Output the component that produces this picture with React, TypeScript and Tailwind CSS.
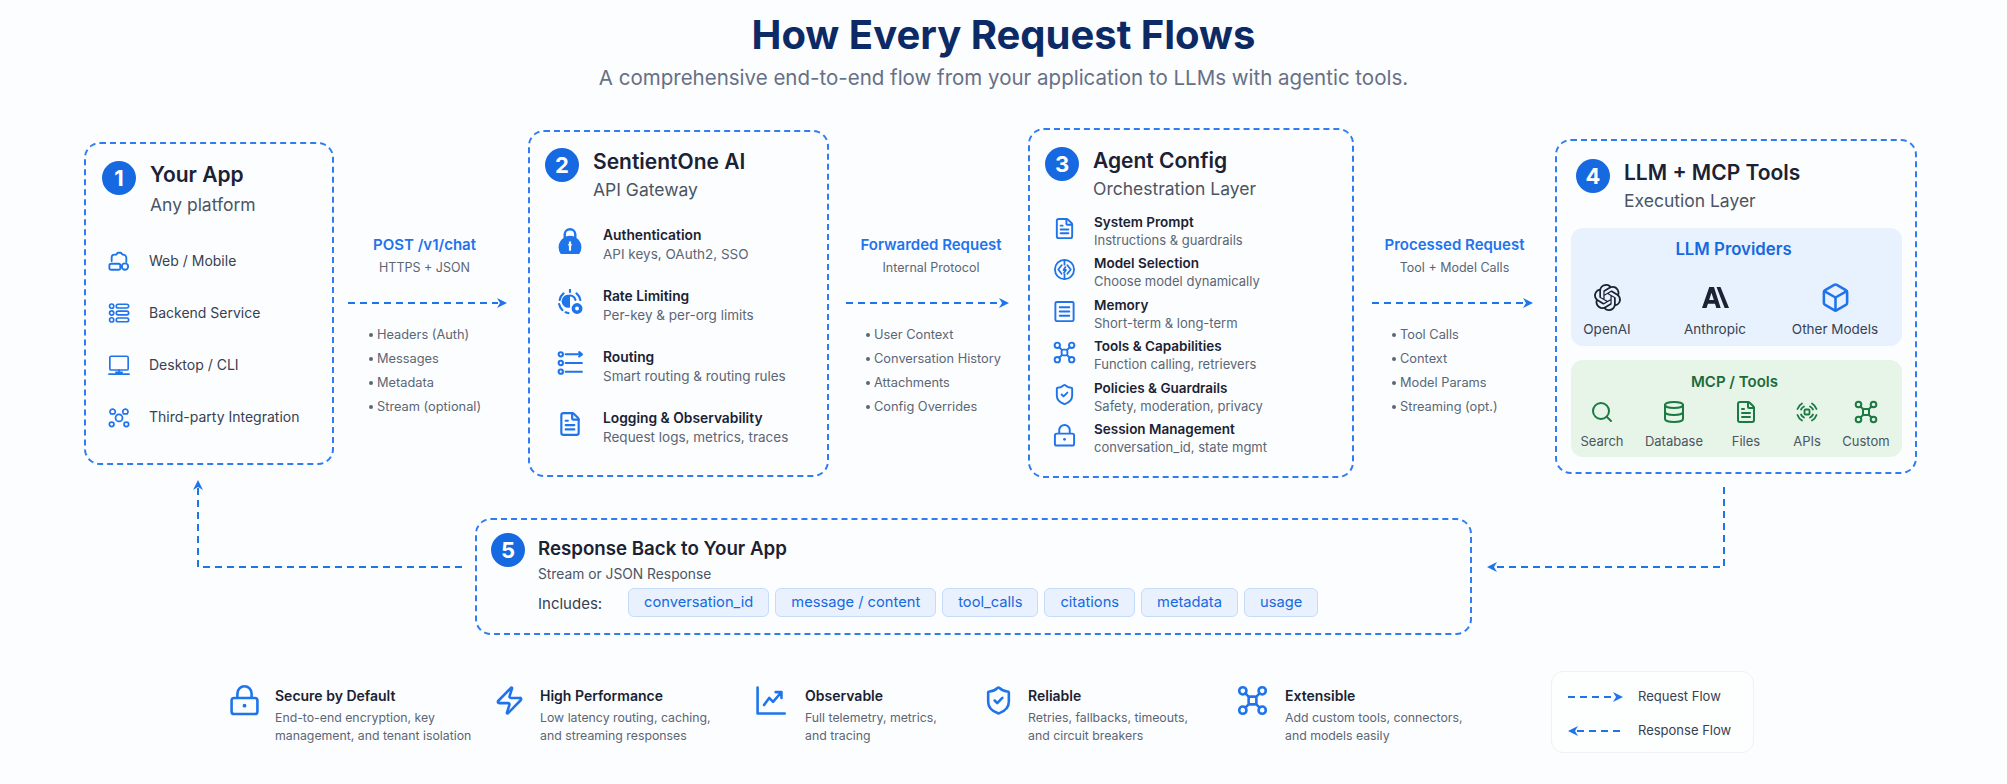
import React from 'react';
import { Database, FileText, Search, Box, ShieldCheck, Zap } from 'lucide-react';
import { SiOpenai } from 'react-icons/si';

type IconProps = { className?: string };

const Svg = ({ className, children, sw = 2 }: IconProps & { children: React.ReactNode; sw?: number }) => (
  <svg viewBox="0 0 24 24" fill="none" stroke="currentColor" strokeWidth={sw} strokeLinecap="round" strokeLinejoin="round" className={className}>
    {children}
  </svg>
);

const WebMobileIcon = ({ className }: IconProps) => (
  <Svg className={className}>
    <path d="M4 12V8a3 3 0 0 1 3-3h2l1.500-2h3.500l2 2a3.500 3.500 0 0 1 4 3.500V13" />
    <rect x="1.500" y="15" width="12" height="6.500" rx="2" />
    <circle cx="18.500" cy="18" r="3.500" />
    <path d="M13.500 18h1.500" />
  </Svg>
);

const ServerRowsIcon = ({ className }: IconProps) => (
  <Svg className={className} sw={1.8}>
    <circle cx="4" cy="4.500" r="2.300" />
    <circle cx="4" cy="12" r="2.300" />
    <circle cx="4" cy="19.500" r="2.300" />
    <rect x="9" y="2.500" width="13.500" height="4" rx="2" />
    <rect x="9" y="10" width="13.500" height="4" rx="2" />
    <rect x="9" y="17.500" width="13.500" height="4" rx="2" />
  </Svg>
);

const DesktopIcon = ({ className }: IconProps) => (
  <Svg className={className} sw={1.8}>
    <rect x="2" y="2.500" width="20" height="15" rx="1.500" />
    <path d="M12 17.500V21M8.500 20h7M1 22h22" />
  </Svg>
);

const IntegrationIcon = ({ className }: IconProps) => (
  <Svg className={className} sw={1.9}>
    <circle cx="12" cy="13" r="3.800" />
    <circle cx="4" cy="20" r="2.500" />
    <circle cx="20" cy="20" r="2.500" />
    <path d="M3 8.500a3 3 0 0 1 3-5 3 3 0 0 1 1 5zM21 8.500a3 3 0 0 0-3-5 3 3 0 0 0-1 5z" />
  </Svg>
);

const SolidLockIcon = ({ className }: IconProps) => (
  <svg viewBox="0 0 24 24" className={className} fill="currentColor">
    <path d="M12 0a6 6 0 0 0-6 6v3.200a10.500 10.500 0 1 0 12 0V6a6 6 0 0 0-6-6zm0 2.200A3.800 3.800 0 0 1 15.800 6v1.800a10.500 10.500 0 0 0-7.600 0V6A3.800 3.800 0 0 1 12 2.200z" />
    <path d="M11 12.500h2V15h1.200L13 16.500V21h-2v-4.500L9.800 15H11z" fill="#fff" />
  </svg>
);

const RateIcon = ({ className }: IconProps) => (
  <svg viewBox="0 0 24 24" className={className} fill="none" stroke="currentColor" strokeWidth="2" strokeLinecap="round">
    <path d="M12 0.800v2M6 4a10 10 0 0 0-3.500 6M2 14a10 10 0 0 0 3 5.500M18 4a10 10 0 0 1 3.500 6M8 21.500a10 10 0 0 0 2.500 .7" />
    <path d="M12 5.500a6 6 0 1 0 0 11.500z" fill="currentColor" stroke="none" />
    <path d="M12 6a5.500 5.500 0 0 1 5 4" />
    <circle cx="18.500" cy="18" r="5" fill="currentColor" stroke="none" />
    <circle cx="18.500" cy="18" r="1.800" fill="#fff" stroke="none" />
  </svg>
);

const RoutingIcon = ({ className }: IconProps) => (
  <Svg className={className} sw={1.9}>
    <circle cx="3.500" cy="4" r="2" />
    <circle cx="3.500" cy="12" r="2" />
    <circle cx="3.500" cy="20" r="2" />
    <path d="M8 4h15M20.500 2l2.500 2-2.500 2M8 12h15M8 20h15" />
  </Svg>
);

const ModelIcon = ({ className }: IconProps) => (
  <Svg className={className} sw={1.9}>
    <circle cx="12" cy="12" r="10" />
    <path d="M12 2v5M12 17v5M9 7.500 5.500 12 9 16.500M15 7.500l3.500 4.500-3.500 4.500M13 9.500l-2 3h2.500l-2 3" />
  </Svg>
);

const MemoryIcon = ({ className }: IconProps) => (
  <Svg className={className}>
    <rect x="2.500" y="2" width="19" height="20" rx="1.500" />
    <path d="M7 7.500h10M7 12h10M7 16.500h10" />
  </Svg>
);

const HubIcon = ({ className }: IconProps) => (
  <Svg className={className} sw={2}>
    <circle cx="4.500" cy="4.500" r="2.800" />
    <circle cx="19.500" cy="4.500" r="2.800" />
    <circle cx="4.500" cy="19.500" r="2.800" />
    <circle cx="19.500" cy="19.500" r="2.800" />
    <rect x="9" y="9" width="6" height="6" rx="1.500" />
    <path d="m6.500 6.500 2.500 2.500M17.500 6.500 15 9M6.500 17.500 9 15M17.500 17.500 15 15" />
  </Svg>
);

const OutlineLockIcon = ({ className }: IconProps) => (
  <svg viewBox="0 0 24 24" className={className} fill="none" stroke="currentColor" strokeWidth="2">
    <rect x="2" y="10" width="20" height="12.500" rx="2" />
    <path d="M6.500 10V6.500a5.500 5.500 0 0 1 11 0V10" />
    <circle cx="12" cy="16" r="1.500" fill="currentColor" stroke="none" />
  </svg>
);

const TrendIcon = ({ className }: IconProps) => (
  <Svg className={className}>
    <path d="M2 2v20h21" />
    <path d="m7 15.500 4-5.500 3 3 6-7M16 5.500h4.500V10" />
  </Svg>
);

const ApisIcon = ({ className }: IconProps) => (
  <Svg className={className} sw={1.8}>
    <rect x="9.500" y="9.500" width="5" height="5" rx="1" />
    <path d="M2.500 9A10 10 0 0 1 7 3.500M21.500 9A10 10 0 0 0 17 3.500M2.500 15A10 10 0 0 0 7 20.500M21.500 15A10 10 0 0 1 17 20.500" />
    <path d="M6 9.500A7 7 0 0 1 9 6.500M18 9.500A7 7 0 0 0 15 6.500M6 14.500A7 7 0 0 0 9 17.500M18 14.500A7 7 0 0 1 15 17.500" />
  </Svg>
);

const AnthropicIcon = ({ className }: IconProps) => (
  <svg viewBox="0 0 26 20" className={className} fill="currentColor">
    <path fillRule="evenodd" d="M0 20 7 0h4.500L18 20h-4.200l-1.300-4H5.700l-1.300 4zM6.900 12.500h4.500L9.100 5.500z" />
    <path d="M14 0h3.800L26 20h-4.200z" />
  </svg>
);

const FlowArrow = ({ width, dir = 'right' }: { width: number; dir?: 'right' | 'left' }) => (
  <svg width={width} height="14" viewBox={`0 0 ${width} 14`} className="block text-[#1f74ec]">
    {dir === 'right' ? (
      <>
        <path d={`M0 7H${width - 9}`} stroke="currentColor" strokeWidth="2" strokeDasharray="7 5" />
        <path d={`M${width - 10} 2 ${width} 7 ${width - 10} 12 ${width - 7} 7z`} fill="currentColor" />
      </>
    ) : (
      <>
        <path d={`M9 7H${width}`} stroke="currentColor" strokeWidth="2" strokeDasharray="7 5" />
        <path d={`M10 2 0 7 10 12 7 7z`} fill="currentColor" />
      </>
    )}
  </svg>
);

const Badge = ({ n }: { n: number }) => (
  <div className="w-[34px] h-[34px] shrink-0 rounded-full bg-[#1669e0] text-white flex items-center justify-center text-[22px] font-bold leading-none">
    {n}
  </div>
);

const CardHeader = ({ n, title, sub, subClass = 'mt-[1px]' }: { n: number; title: string; sub: string; subClass?: string }) => (
  <div className="flex gap-[14px]">
    <Badge n={n} />
    <div>
      <div className="text-[21px] leading-[28px] font-semibold text-[#1a2233]">{title}</div>
      <div className={`${subClass} text-[17.500px] leading-[26px] text-[#4b5563]`}>{sub}</div>
    </div>
  </div>
);

const CARD = 'shrink-0 rounded-[16px] border-2 border-dashed border-[#2f7df0] bg-[#fcfdfe]';

const appItems = [
  { Icon: WebMobileIcon, label: 'Web / Mobile' },
  { Icon: ServerRowsIcon, label: 'Backend Service' },
  { Icon: DesktopIcon, label: 'Desktop / CLI' },
  { Icon: IntegrationIcon, label: 'Third-party Integration' },
];

const gatewayItems = [
  { Icon: SolidLockIcon, title: 'Authentication', sub: 'API keys, OAuth2, SSO' },
  { Icon: RateIcon, title: 'Rate Limiting', sub: 'Per-key & per-org limits' },
  { Icon: RoutingIcon, title: 'Routing', sub: 'Smart routing & routing rules' },
  { Icon: FileText, title: 'Logging & Observability', sub: 'Request logs, metrics, traces' },
];

const agentItems = [
  { Icon: FileText, title: 'System Prompt', sub: 'Instructions & guardrails' },
  { Icon: ModelIcon, title: 'Model Selection', sub: 'Choose model dynamically' },
  { Icon: MemoryIcon, title: 'Memory', sub: 'Short-term & long-term' },
  { Icon: HubIcon, title: 'Tools & Capabilities', sub: 'Function calling, retrievers' },
  { Icon: ShieldCheck, title: 'Policies & Guardrails', sub: 'Safety, moderation, privacy' },
  { Icon: OutlineLockIcon, title: 'Session Management', sub: 'conversation_id, state mgmt' },
];

const mcpTools = [
  { Icon: Search, label: 'Search', col: 'w-[62px]' },
  { Icon: Database, label: 'Database', col: 'w-[82px]' },
  { Icon: FileText, label: 'Files', col: 'w-[62px]' },
  { Icon: ApisIcon, label: 'APIs', col: 'w-[60px]' },
  { Icon: HubIcon, label: 'Custom', col: 'w-[58px]' },
];

const chips = ['conversation_id', 'message / content', 'tool_calls', 'citations', 'metadata', 'usage'];

const features = [
  { Icon: OutlineLockIcon, title: 'Secure by Default', lines: ['End-to-end encryption, key', 'management, and tenant isolation'], item: 'w-[265px]', col: 'w-[43px]' },
  { Icon: Zap, title: 'High Performance', lines: ['Low latency routing, caching,', 'and streaming responses'], item: 'w-[261px]', col: 'w-[43px]' },
  { Icon: TrendIcon, title: 'Observable', lines: ['Full telemetry, metrics,', 'and tracing'], item: 'w-[228px]', col: 'w-[47px]' },
  { Icon: ShieldCheck, title: 'Reliable', lines: ['Retries, fallbacks, timeouts,', 'and circuit breakers'], item: 'w-[254px]', col: 'w-[42px]' },
  { Icon: HubIcon, title: 'Extensible', lines: ['Add custom tools, connectors,', 'and models easily'], item: 'w-[311px]', col: 'w-[45px]' },
];

const Connector = ({ label, sub, items, boxClass, labelClass, arrowClass, listClass, arrowWidth }: {
  label: string;
  sub: string;
  items: string[];
  boxClass: string;
  labelClass: string;
  arrowClass: string;
  listClass: string;
  arrowWidth: number;
}) => (
  <div className={`${boxClass} shrink-0 self-stretch pt-[106px]`}>
    <div className={`${labelClass} text-center`}>
      <div className="text-[15px] leading-[22px] font-semibold text-[#1f74ec] whitespace-nowrap">{label}</div>
      <div className="text-[12.500px] leading-[18px] mt-[3px] text-[#5b6675] whitespace-nowrap">{sub}</div>
    </div>
    <div className={`${arrowClass} mt-[19px]`}>
      <FlowArrow width={arrowWidth} />
    </div>
    <ul className={`${listClass} mt-[13px]`}>
      {items.map(item => (
        <li key={item} className="flex items-center gap-[4px] text-[12.800px] leading-[24px] text-[#5b6675] whitespace-nowrap">
          <span className="w-[4px] h-[4px] rounded-full bg-[#5b6675]" />
          {item}
        </li>
      ))}
    </ul>
  </div>
);

export default function App() {
  return (
    <div className="w-[2007px] h-[784px] overflow-hidden bg-[#fcfdfe] font-['Inter',sans-serif]">
      {/* Heading */}
      <div className="pt-[13px] text-center">
        <h1 className="text-[40px] leading-[44px] font-bold text-[#0c2a66]">How Every Request Flows</h1>
        <p className="text-[20.500px] leading-[28px] mt-[7px] text-[#667085]">
          A comprehensive end-to-end flow from your application to LLMs with agentic tools.
        </p>
      </div>

      {/* Main flow */}
      <div className="flex items-center h-[350px] mt-[36px] pl-[84px]">
        <div className={`${CARD} w-[250px] h-[323px] pl-[16px] pt-[17px]`}>
          <CardHeader n={1} title="Your App" sub="Any platform" subClass="mt-[3px]" />
          <div className="mt-[17px]">
            {appItems.map(({ Icon, label }) => (
              <div key={label} className="flex items-center h-[52px] pl-[6px] gap-[19px]">
                <Icon className="w-[22px] h-[22px] text-[#1f74ec] shrink-0" />
                <span className="text-[14px] text-[#374151] whitespace-nowrap">{label}</span>
              </div>
            ))}
          </div>
        </div>

        <Connector
          label="POST /v1/chat"
          sub="HTTPS + JSON"
          items={['Headers (Auth)', 'Messages', 'Metadata', 'Stream (optional)']}
          boxClass="w-[194px]"
          labelClass="pr-[13px]"
          arrowClass="ml-[14px]"
          listClass="ml-[35px]"
          arrowWidth={159}
        />

        <div className={`${CARD} w-[301px] h-[347px] pl-[15px] pt-[16px]`}>
          <CardHeader n={2} title="SentientOne AI" sub="API Gateway" />
          <div className="mt-[22px] flex flex-col gap-[22px] pl-[12px]">
            {gatewayItems.map(({ Icon, title, sub }) => (
              <div key={title} className="flex h-[39px] gap-[20px]">
                <Icon className="w-[26px] h-[26px] mt-[3px] text-[#1f74ec] shrink-0" />
                <div>
                  <div className="text-[13.800px] leading-[20px] font-semibold text-[#1a2233] whitespace-nowrap">{title}</div>
                  <div className="text-[13.500px] leading-[19px] text-[#5b6675] whitespace-nowrap">{sub}</div>
                </div>
              </div>
            ))}
          </div>
        </div>

        <Connector
          label="Forwarded Request"
          sub="Internal Protocol"
          items={['User Context', 'Conversation History', 'Attachments', 'Config Overrides']}
          boxClass="w-[199px]"
          labelClass="pl-[5px]"
          arrowClass="ml-[17px]"
          listClass="ml-[37px]"
          arrowWidth={163}
        />

        <div className={`${CARD} w-[326px] h-[350px] pl-[15px] pt-[17px]`}>
          <CardHeader n={3} title="Agent Config" sub="Orchestration Layer" />
          <div className="mt-[11px] flex flex-col gap-[5.400px] pl-[8px]">
            {agentItems.map(({ Icon, title, sub }) => (
              <div key={title} className="flex h-[36px] gap-[18px]">
                <Icon className="w-[23px] h-[23px] mt-[4px] text-[#1f74ec] shrink-0" />
                <div>
                  <div className="text-[13.500px] leading-[18px] font-semibold text-[#1a2233] whitespace-nowrap">{title}</div>
                  <div className="text-[13px] leading-[18px] text-[#5b6675] whitespace-nowrap">{sub}</div>
                </div>
              </div>
            ))}
          </div>
        </div>

        <Connector
          label="Processed Request"
          sub="Tool + Model Calls"
          items={['Tool Calls', 'Context', 'Model Params', 'Streaming (opt.)']}
          boxClass="w-[201px]"
          labelClass=""
          arrowClass="ml-[18px]"
          listClass="ml-[38px]"
          arrowWidth={161}
        />

        <div className={`${CARD} w-[362px] h-[335px] mt-[7px] pl-[14px] pt-[18px]`}>
          <div className="pl-[5px]">
            <CardHeader n={4} title="LLM + MCP Tools" sub="Execution Layer" />
          </div>
          <div className="mt-[14px] w-[331px] h-[118px] rounded-[12px] bg-[#e8f1fe] pt-[10px]">
            <div className="text-center pr-[6px] text-[16.800px] leading-[22px] font-semibold text-[#1669e0]">LLM Providers</div>
            <div className="grid grid-cols-[72px_144px_96px] mt-[20px] text-center text-[13.500px] leading-[18px] text-[#374151]">
              <div className="flex flex-col items-center justify-end gap-[9px] h-[58px]">
                <SiOpenai className="w-[27px] h-[27px] text-[#1a2233]" />
                <span>OpenAI</span>
              </div>
              <div className="flex flex-col items-center justify-end gap-[9px] h-[58px]">
                <AnthropicIcon className="w-[27px] h-[27px] text-[#1a2233]" />
                <span>Anthropic</span>
              </div>
              <div className="flex flex-col items-center justify-end gap-[7px] h-[58px]">
                <Box className="w-[31px] h-[31px] text-[#1f74ec]" />
                <span className="whitespace-nowrap">Other Models</span>
              </div>
            </div>
          </div>
          <div className="mt-[14px] w-[331px] h-[97px] rounded-[12px] bg-[#e7f4e8] pt-[11px]">
            <div className="text-center pr-[4px] text-[15px] leading-[22px] font-semibold text-[#1b6b3a]">MCP / Tools</div>
            <div className="flex mt-[7px] text-[13px] leading-[18px] text-[#4b5563]">
              {mcpTools.map(({ Icon, label, col }) => (
                <div key={label} className={`${col} flex flex-col items-center gap-[8px]`}>
                  <Icon className="w-[24px] h-[24px] text-[#1b7a43]" />
                  <span>{label}</span>
                </div>
              ))}
            </div>
          </div>
        </div>
      </div>

      {/* Response row */}
      <div className="relative mt-[40px] pl-[475px]">
        <svg width="280" height="100" viewBox="0 0 280 100" className="absolute left-[190px] top-[-40px] text-[#1f74ec]">
          <path d="M272 89H8V10" fill="none" stroke="currentColor" strokeWidth="2" strokeDasharray="7 5" />
          <path d="M8 2 3 12 8 9 13 12z" fill="currentColor" />
        </svg>
        <svg width="250" height="100" viewBox="0 0 250 100" className="absolute left-[1480px] top-[-40px] text-[#1f74ec]">
          <path d="M244 9V89H16" fill="none" stroke="currentColor" strokeWidth="2" strokeDasharray="7 5" />
          <path d="M7 89 17 84 14 89 17 94z" fill="currentColor" />
        </svg>
        <div className={`${CARD} w-[997px] h-[117px] pl-[14px] pt-[13px] flex gap-[13px]`}>
          <Badge n={5} />
          <div>
            <div className="text-[18.700px] leading-[28px] mt-[2px] font-semibold text-[#1a2233]">Response Back to Your App</div>
            <div className="text-[13.800px] leading-[20px] mt-[1px] text-[#4b5563]">Stream or JSON Response</div>
            <div className="flex items-center mt-[4px]">
              <span className="w-[90px] mt-[3px] text-[15px] text-[#374151]">Includes:</span>
              <div className="flex gap-[6px]">
                {chips.map(chip => (
                  <span key={chip} className="h-[29px] px-[15px] flex items-center rounded-[6px] border border-[#c5dcf9] bg-[#e8f1fd] text-[14.700px] text-[#1669e0] whitespace-nowrap">
                    {chip}
                  </span>
                ))}
              </div>
            </div>
          </div>
        </div>
      </div>

      {/* Feature strip */}
      <div className="flex mt-[36px] pl-[232px]">
        {features.map(({ Icon, title, lines, item, col }) => (
          <div key={title} className={`${item} flex mt-[16px]`}>
            <div className={col}>
              <Icon className="w-[31px] h-[31px] -ml-[3px] -mt-[2px] text-[#1f74ec]" />
            </div>
            <div>
              <div className="text-[14px] leading-[18px] font-semibold text-[#1a2233]">{title}</div>
              <div className="mt-[4px] text-[12.300px] leading-[18px] text-[#5b6675] whitespace-nowrap">
                {lines.map(line => (
                  <div key={line}>{line}</div>
                ))}
              </div>
            </div>
          </div>
        ))}
        <div className="w-[203px] h-[82px] rounded-[12px] border border-[#eef1f5] bg-[#fdfefe] pl-[16px] pt-[15px] flex flex-col gap-[14px]">
          <div className="flex items-center h-[20px] gap-[15px] text-[13px] text-[#374151]">
            <FlowArrow width={55} />
            Request Flow
          </div>
          <div className="flex items-center h-[20px] gap-[15px] text-[13px] text-[#374151]">
            <FlowArrow width={55} dir="left" />
            Response Flow
          </div>
        </div>
      </div>
    </div>
  );
}
